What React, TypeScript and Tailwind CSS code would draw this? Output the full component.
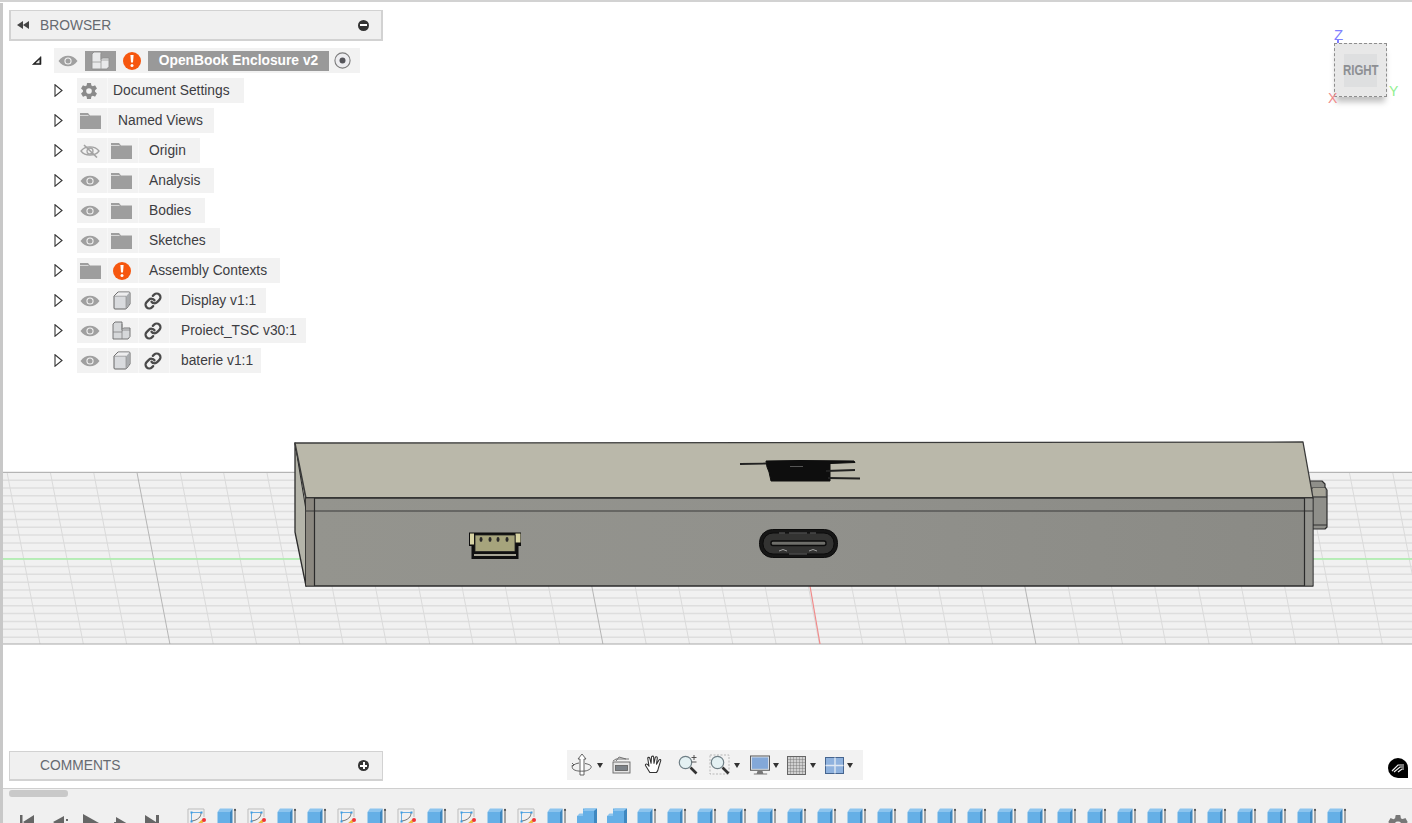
import { ReactNode } from 'react'
import { Link as LinkIcon } from 'lucide-react'
import { IoSettingsSharp } from 'react-icons/io5'

const font = "font-['Liberation_Sans',Arial,sans-serif]"

// timeline features, S = sketch, B = body, L = combine
const timeline = 'SBSBBSBSBSBSBLLBBBBBBBBBBBBBBBBBBBBBBBB'.split('')

function Eye({ off }: { off?: boolean }) {
  if (off) {
    return (
      <svg width="20" height="14" viewBox="0 0 20 14" fill="none" stroke="#a3a3a3" strokeWidth="1.3">
        <path d="M1 7 C5 1.5 15 1.5 19 7 C15 12.5 5 12.5 1 7 Z" />
        <circle cx="10" cy="7" r="3" />
        <path d="M4 1 L17 13.5" strokeWidth="1.6" />
      </svg>
    )
  }
  return (
    <svg width="20" height="12" viewBox="0 0 20 12">
      <path d="M0.5 6 C5 -1 15 -1 19.5 6 C15 13 5 13 0.5 6 Z" fill="#a0a0a0" />
      <circle cx="10" cy="6" r="3.6" fill="#f2f2f2" />
      <circle cx="10" cy="6" r="2.5" fill="#a0a0a0" />
    </svg>
  )
}

function Folder() {
  return (
    <svg width="21" height="16" viewBox="0 0 21 16">
      <path d="M0 0 H8 L10 2.5 H21 V16 H0 Z" fill="#9e9e9e" />
      <path d="M0 2.5 H8.5" stroke="#e6e6e6" strokeWidth="0.8" />
    </svg>
  )
}

function Warn() {
  return (
    <div className="flex h-[18px] w-[18px] items-center justify-center rounded-full bg-[#f6570f]">
      <svg width="4" height="12" viewBox="0 0 4 12" fill="#fff">
        <path d="M0.4 0 H3.6 L3 7.6 H1 Z" />
        <circle cx="2" cy="10.4" r="1.5" />
      </svg>
    </div>
  )
}

function Cube() {
  return (
    <svg width="18" height="19" viewBox="0 0 18 19">
      <path d="M1 5 L5 1 H16 Q17 1 17 2 V13 L13.5 17.5 Q13 18 12 18 H2 Q1 18 1 17 Z" fill="#d9dbde" stroke="#666" strokeWidth="1" strokeLinejoin="round" />
      <path d="M1.5 5 L5.2 1.5 H16.5 L13 5 Z" fill="#eeeeef" />
      <path d="M13 5.5 L16.6 1.5 V13 L13 17.5 Z" fill="#a9acaf" />
      <path d="M1.5 5.2 H13 V17.5" fill="none" stroke="#8f8f8f" strokeWidth="0.7" />
    </svg>
  )
}

function Component({ light }: { light?: boolean }) {
  return (
    <svg width="19" height="19" viewBox="0 0 19 19">
      <path d="M1 3 L3 1 H10 V8.5 L11.5 7 H18 V15.5 L16 18 H1 Z" fill={light ? '#e8e9ea' : '#d6d8da'} stroke={light ? '#8f8f8f' : '#6a6a6a'} strokeWidth="0.9" strokeLinejoin="round" />
      <path d="M1 11 H10 V18 M10 3 V11 M10 10 L11.5 9 H18" fill="none" stroke={light ? '#9a9a9a' : '#808080'} strokeWidth="0.8" />
    </svg>
  )
}

function Slot({ children, pl = 'pl-[3px]' }: { children: ReactNode; pl?: string }) {
  return <div className={`flex h-full w-[31px] shrink-0 items-center border-r border-[#f8f8f8] ${pl}`}>{children}</div>
}

function Chain() {
  return <LinkIcon size={18} color="#4a4a4a" strokeWidth={3} />
}

function Row({ children, label, pl, pr = 'pr-[12px]' }: { children: ReactNode; label: string; pl: string; pr?: string }) {
  return (
    <div className="flex h-[25px] items-center">
      <svg width="9" height="13" viewBox="0 0 9 13" className="ml-[45px] mr-[14px] shrink-0" fill="#fff" stroke="#333" strokeWidth="1.1">
        <path d="M1 0.8 L8 6.5 L1 12.2 Z" />
      </svg>
      <div className="flex h-full items-center bg-[#f2f2f2]">
        {children}
        <span className={`pt-[2px] text-[13.8px] text-[#3d3d42] ${pl} ${pr}`}>{label}</span>
      </div>
    </div>
  )
}

function BrowserTree() {
  return (
    <div className="mt-[7px] flex flex-col gap-[5px]">
      <div className="flex h-[25px] items-center">
        <svg width="10" height="9" viewBox="0 0 10 9" className="ml-[23px] mr-[12px] shrink-0">
          <path d="M9 0.5 V8.5 H0.5 Z" fill="#222" stroke="#222" strokeWidth="0.6" />
          <path d="M7.5 3.5 V7.3 H3.6 Z" fill="#e8e8e8" />
        </svg>
        <div className="flex h-full items-center bg-[#f2f2f2]">
          <div className="flex w-[31px] items-center pl-[4px]"><Eye /></div>
          <div className="flex h-[20px] w-[31px] items-center justify-center bg-[#9b9b9b]"><Component light /></div>
          <div className="flex w-[32px] items-center justify-center"><Warn /></div>
          <div className="flex h-[20px] w-[181px] items-center justify-center bg-[#999999] pt-[2px] text-[13.8px] font-bold text-white">OpenBook Enclosure v2</div>
          <div className="flex w-[31px] items-center pl-[5px]">
            <svg width="17" height="17" viewBox="0 0 17 17">
              <circle cx="8.5" cy="8.5" r="7.6" fill="#ededf0" stroke="#7c7c7c" strokeWidth="1.1" />
              <circle cx="8.5" cy="8.5" r="3" fill="#55555a" />
            </svg>
          </div>
        </div>
      </div>
      <Row label="Document Settings" pl="pl-[5px]" pr="pr-[14px]">
        <Slot><IoSettingsSharp size={18} color="#8a8a8a" /></Slot>
      </Row>
      <Row label="Named Views" pl="pl-[10px]" pr="pr-[11px]">
        <Slot><Folder /></Slot>
      </Row>
      <Row label="Origin" pl="pl-[10px]" pr="pr-[14px]">
        <Slot><Eye off /></Slot>
        <Slot><Folder /></Slot>
      </Row>
      <Row label="Analysis" pl="pl-[10px]" pr="pr-[14px]">
        <Slot><Eye /></Slot>
        <Slot><Folder /></Slot>
      </Row>
      <Row label="Bodies" pl="pl-[10px]" pr="pr-[14px]">
        <Slot><Eye /></Slot>
        <Slot><Folder /></Slot>
      </Row>
      <Row label="Sketches" pl="pl-[10px]" pr="pr-[14px]">
        <Slot><Eye /></Slot>
        <Slot><Folder /></Slot>
      </Row>
      <Row label="Assembly Contexts" pl="pl-[10px]" pr="pr-[13px]">
        <Slot><Folder /></Slot>
        <Slot pl="pl-[5px]"><Warn /></Slot>
      </Row>
      <Row label="Display v1:1" pl="pl-[11px]" pr="pr-[10px]">
        <Slot><Eye /></Slot>
        <Slot pl="pl-[5px]"><Cube /></Slot>
        <Slot pl="pl-[5px]"><Chain /></Slot>
      </Row>
      <Row label="Proiect_TSC v30:1" pl="pl-[11px]" pr="pr-[9px]">
        <Slot><Eye /></Slot>
        <Slot pl="pl-[4px]"><Component /></Slot>
        <Slot pl="pl-[5px]"><Chain /></Slot>
      </Row>
      <Row label="baterie v1:1" pl="pl-[11px]" pr="pr-[8px]">
        <Slot><Eye /></Slot>
        <Slot pl="pl-[5px]"><Cube /></Slot>
        <Slot pl="pl-[5px]"><Chain /></Slot>
      </Row>
    </div>
  )
}

function Grid() {
  const rows = Array.from({ length: 22 }, (_, i) => 472.3 + 7.85 * i)
  const cols = Array.from({ length: 34 }, (_, i) => i)
  return (
    <g>
      <rect x="3" y="472" width="1409" height="172" fill="#f1f1f1" />
      {rows.map((y) => (
        <line key={y} x1="3" x2="1412" y1={y} y2={y} stroke="#dedede" strokeWidth="1.5" />
      ))}
      {cols.map((i) => {
        const major = i % 10 === 3
        return (
          <line
            key={i}
            x1={7 + 43.3 * i}
            y1="472"
            x2={40 + 43.3 * i}
            y2="644"
            stroke={major ? '#b5b5b5' : '#dadada'}
            strokeWidth="1"
          />
        )
      })}
      <line x1="3" x2="1412" y1="559" y2="559" stroke="#a8f0a8" strokeWidth="1.5" />
      <line x1="3" x2="1412" y1="472.5" y2="472.5" stroke="#b4b4b4" strokeWidth="1" />
      <line x1="3" x2="1412" y1="644" y2="644" stroke="#a8a8a8" strokeWidth="1" />
      <line x1="810" y1="586" x2="820" y2="644" stroke="#f08a8a" strokeWidth="1.2" />
    </g>
  )
}

function Enclosure() {
  return (
    <g strokeLinejoin="round">
      <defs>
        <linearGradient id="front" x1="0" y1="0" x2="1" y2="0">
          <stop offset="0" stopColor="#94948e" />
          <stop offset="0.5" stopColor="#91918c" />
          <stop offset="1" stopColor="#8a8a85" />
        </linearGradient>
      </defs>
      {/* knob at the right end */}
      <path d="M1310 481 H1322 L1325 484 V487 L1327 490 V527 L1325 529 H1312 Z" fill="#8f8f8a" stroke="#2e2e2e" strokeWidth="1.2" />
      <path d="M1311 488 H1325 M1313 497 H1327 M1313 525 H1327" stroke="#2e2e2e" strokeWidth="1" fill="none" />
      <rect x="1313" y="488" width="12" height="8" fill="#a6a498" />
      {/* left side */}
      <path d="M295 443 L306 498 V586 L295 532 Z" fill="#b4b4a9" stroke="#2b2b2b" strokeWidth="1.3" />
      <path d="M295 443 L306 510" stroke="#2b2b2b" strokeWidth="1" />
      {/* top */}
      <path d="M295 443 L1303 442 L1313 498 H306 Z" fill="#bab8aa" stroke="#3a3a3a" strokeWidth="1.3" />
      {/* front */}
      <rect x="306" y="498" width="1007" height="88" fill="url(#front)" stroke="#2b2b2b" strokeWidth="1.3" />
      <rect x="306" y="498.5" width="8.5" height="87" fill="#8b8880" />
      <rect x="1304.5" y="498.5" width="8" height="87" fill="#94948f" />
      <line x1="306" x2="1313" y1="511" y2="511" stroke="#3a3a3a" strokeWidth="1.2" />
      <line x1="314.5" x2="314.5" y1="498" y2="586" stroke="#2b2b2b" strokeWidth="1.2" />
      <line x1="1304.5" x2="1304.5" y1="498" y2="586" stroke="#2b2b2b" strokeWidth="1.2" />
      {/* scribbled out text */}
      <path d="M766 461 L800 460.5 L854 461 L855 462.5 L830 463.5 L830 481 L771 481 L769 472 L767 467 Z" fill="#0e0e0e" stroke="#0e0e0e" strokeWidth="1" />
      <path d="M740 464 L766 463.5 M826 471 L855 470 M828 478 L860 478.5" stroke="#222" strokeWidth="1.8" fill="none" />
      <line x1="790" x2="803" y1="466.5" y2="466.5" stroke="#555" strokeWidth="1" />
      {/* wire connector */}
      <path d="M469 532.5 H521 V546 H518.5 V559 H471.5 V546 H469 Z" fill="#0f0f0f" />
      <rect x="470" y="533.5" width="4" height="11" fill="#d8d4a4" />
      <rect x="515.5" y="533.5" width="5" height="9" fill="#d8d4a4" />
      <rect x="475" y="535" width="40" height="16.5" fill="#a6a47c" stroke="#222" strokeWidth="0.8" />
      <rect x="474" y="554" width="42" height="2" fill="#a5a394" />
      {[481, 490, 498, 507].map((x) => (
        <ellipse key={x} cx={x} cy="539.5" rx="1.5" ry="2.4" fill="#2a2a2a" />
      ))}
      {/* usb c port */}
      <rect x="759.5" y="529.5" width="78" height="28" rx="13" fill="#161616" stroke="#0c0c0c" strokeWidth="1" />
      <rect x="763" y="533" width="71" height="21" rx="10" fill="#333332" stroke="#0c0c0c" strokeWidth="1" />
      <rect x="771" y="541" width="55" height="4.5" rx="2" fill="#6e6e6a" stroke="#0c0c0c" strokeWidth="1.4" />
      <path d="M779 551 Q783 548 787 551 M809 551 Q813 548 817 551" stroke="#bbb" strokeWidth="0.8" fill="none" />
      <path d="M779 533 H785 M810 533 H816 M789 533 H807 M789 554 H807" stroke="#777" strokeWidth="0.8" fill="none" />
    </g>
  )
}

function Caret({ ml }: { ml: string }) {
  return <div className={`h-0 w-0 border-x-[3.5px] border-t-[5px] border-x-transparent border-t-[#333] ${ml}`} />
}

function Magnifier({ dashed, plus }: { dashed?: boolean; plus?: boolean }) {
  return (
    <svg width="22" height="22" viewBox="0 0 22 22" fill="none">
      {dashed && <rect x="1" y="1" width="19" height="19" stroke="#aaa" strokeWidth="0.8" strokeDasharray="2 1.5" />}
      <circle cx="8.5" cy="8.5" r="6.2" fill="#e4f1f3" stroke="#6f7f86" strokeWidth="1.2" />
      <path d="M13.5 13.5 L19.5 19.5" stroke="#333" strokeWidth="2.6" />
      {plus && <path d="M17 1 V6 M14.5 3.5 H19.5 M14.5 8 H19.5" stroke="#444" strokeWidth="0.9" />}
    </svg>
  )
}

function NavBar() {
  return (
    <div className="absolute left-[564px] top-[747px] flex h-[30px] w-[296px] items-center bg-[#f2f2f2] pl-[4px]">
      <svg width="22" height="24" viewBox="0 0 22 24" fill="none" stroke="#555" strokeWidth="0.9">
        <path d="M11 1 L15 6 H13 V22 H9 V6 H7 Z" fill="#fff" />
        <path d="M8 10 C2 11 0 14 2 16 C4 18 9 18.5 14 18 C18 17.5 21 15 20 13 C19.5 12 17 11 14 10.5" />
        <path d="M3 12 L1 10 M3 12 L0.5 13" />
      </svg>
      <Caret ml="ml-[4px]" />
      <svg className="ml-[8.5px]" width="19" height="18" viewBox="0 0 19 18" fill="none" stroke="#666" strokeWidth="0.9">
        <path d="M4 5 L7 1 L14 3" />
        <rect x="1" y="6" width="17" height="11" fill="#e4e4e4" />
        <rect x="3.5" y="9.5" width="12" height="5" fill="#7c8288" />
        <path d="M1 5 L4 3 H17" />
      </svg>
      <svg className="ml-[13px]" width="20" height="22" viewBox="0 0 24 24" fill="#fff" stroke="#333" strokeWidth="1.3" strokeLinejoin="round">
        <path d="M7 21 L2 13 C1 11 3 10 4.5 11.5 L6 13.5 L4.5 4 C4.5 2.5 6.5 2.5 7 4 L8.5 10 L9 2.5 C9 1 11.5 1 11.5 2.5 L12 10 L13.5 3 C14 1.5 16 2 16 3.5 L15 11 L18 6 C19 4.8 20.5 5.6 20 7 L17.5 15 C17 18 16 20 15 21 Z" />
      </svg>
      <div className="ml-[13px]"><Magnifier plus /></div>
      <div className="ml-[10px]"><Magnifier dashed /></div>
      <Caret ml="ml-[3.5px]" />
      <svg className="ml-[9.5px]" width="20" height="21" viewBox="0 0 21 21">
        <rect x="0.5" y="0.5" width="20" height="15" fill="#dfe3e8" stroke="#555" />
        <rect x="2" y="2" width="17" height="12" fill="#83a8d8" />
        <path d="M8 16 H13 L14 19 H18 V20 H4 V19 H7 Z" fill="#777" />
      </svg>
      <Caret ml="ml-[3px]" />
      <svg className="ml-[8.5px]" width="19" height="19" viewBox="0 0 19 19">
        <defs>
          <pattern id="cells" width="3" height="3" patternUnits="userSpaceOnUse">
            <path d="M3 0 H0 V3" fill="none" stroke="#6f6f6f" strokeWidth="0.8" />
          </pattern>
        </defs>
        <rect x="0.5" y="0.5" width="18" height="18" fill="#d0d0d0" />
        <rect x="0.5" y="0.5" width="18" height="18" fill="url(#cells)" stroke="#666" />
      </svg>
      <Caret ml="ml-[3.5px]" />
      <svg className="ml-[9.5px]" width="19" height="17" viewBox="0 0 19 17">
        <rect x="0.5" y="0.5" width="18" height="16" fill="#8fb2de" stroke="#46658f" />
        <path d="M10 0.5 V16.5 M0.5 8.5 H18.5" stroke="#dfe8f3" strokeWidth="1.4" />
      </svg>
      <Caret ml="ml-[2.5px]" />
    </div>
  )
}

function ViewCube() {
  return (
    <div className="absolute left-[1322px] top-[24px] h-[80px] w-[80px]">
      <span className="absolute left-[9px] top-0 text-[15px] leading-[15px] text-[#8080ff]">Z</span>
      <div className="absolute left-[12px] top-[13px] h-[4px] w-[2px] bg-[#8080ff]" />
      <div className="absolute left-[9px] top-[16px] flex h-[54px] w-[53px] items-center justify-center border border-dashed border-[#8e8e8e] bg-[#e8e8e8] shadow-[0_7px_6px_-2px_rgba(0,0,0,0.25)]">
        <div className="flex h-[33px] w-[33px] items-center justify-center bg-[#dedfe0] text-[14px] font-bold text-[#8d8f93]">
          <span className="inline-block scale-x-[0.82]">RIGHT</span>
        </div>
      </div>
      <span className="absolute left-[64px] top-[57px] text-[14px] leading-[15px] text-[#90f090]">Y</span>
      <span className="absolute left-[3px] top-[64px] text-[14px] leading-[15px] text-[#f08c8c]">X</span>
    </div>
  )
}

function SketchIcon() {
  return (
    <svg width="20" height="19" viewBox="0 0 20 19" fill="none">
      <path d="M1 19 V1 H17 V9" stroke="#bdbdbd" strokeWidth="1" />
      <path d="M4.5 4.5 H14.5 M4.5 4.5 V14" stroke="#3f9be0" strokeWidth="0.8" />
      <path d="M14 5 C14 9 11 12 5 13" stroke="#555" strokeWidth="0.8" />
      <rect x="3.5" y="3.5" width="2" height="2" fill="#3f9be0" />
      <rect x="13.5" y="3.5" width="2" height="2" fill="#3f9be0" />
      <rect x="3.5" y="12.5" width="2" height="2" fill="#3f9be0" />
      <path d="M10 16 L15 11.5 L17 13.5 L12 18 Z" fill="#f2b53a" />
      <circle cx="17" cy="12" r="2" fill="#f0353a" />
    </svg>
  )
}

function BodyIcon() {
  return (
    <svg width="20" height="19" viewBox="0 0 20 19">
      <path d="M0.5 4 L3 0.5 H15.5 L13 4 Z" fill="#8cc4ee" />
      <rect x="0.5" y="4" width="12.5" height="15" fill="#65afe6" />
      <path d="M13 4 L15.5 0.5 V19 H13 Z" fill="#3f88c0" />
      <path d="M18 19 V1" stroke="#333" strokeWidth="0.8" />
      <path d="M16.8 2.4 L18 0.6 L19.2 2.4 Z" fill="#222" />
    </svg>
  )
}

function CombineIcon() {
  return (
    <svg width="20" height="19" viewBox="0 0 20 19">
      <path d="M6 0.5 H20 V15 H17 V18 H0 V8 H6 Z" fill="#65afe6" />
      <path d="M6 3 L8 0.5 H20 L17 3 Z" fill="#8cc4ee" />
      <path d="M17 3 L20 0.5 V15 L17 18 Z" fill="#3f88c0" />
      <path d="M0 8 L2.5 5.5 H6 V8 Z" fill="#8cc4ee" />
    </svg>
  )
}

function Timeline() {
  return (
    <div className="relative h-[35px] shrink-0 overflow-hidden border-t border-[#cfcfcf] bg-[#f0f0f0]">
      <div className="ml-[6px] mt-[1px] h-[7px] w-[59px] rounded-[3px] bg-[#c9c9c9]" />
      <div className="mt-[11px] flex h-[20px] items-start pl-[184px]">
        {timeline.map((t, i) => (
          <div key={i} className="w-[30px] shrink-0">
            {t === 'S' ? <SketchIcon /> : t === 'L' ? <CombineIcon /> : <BodyIcon />}
          </div>
        ))}
      </div>
      {/* play controls, cut by the window bottom */}
      <svg className="absolute left-[14px] top-[25px]" width="146" height="18" viewBox="0 0 146 18" fill="#666">
        <path d="M3 1 H5.5 V16 H3 Z M17 1 V16 L6 8 Z" />
        <path d="M36 8 L47 2 V16 Z M49 5 H51 V7 H49 Z" />
        <path d="M66 0 L82 9 L66 18 Z" />
        <path d="M97 8 H99 V3 L111 10 L99 16 Z" />
        <path d="M128 1 L139 8 V1 H142 V16 H139 V9 L128 16 Z" />
      </svg>
      <div className="absolute left-[1384px] top-[25px]">
        <IoSettingsSharp size={22} color="#777" />
      </div>
    </div>
  )
}

export default function App() {
  return (
    <div className={`flex h-[823px] w-[1412px] flex-col overflow-hidden bg-white ${font}`}>
      <div className="h-[3px] shrink-0 border-t-2 border-[#d2d2d2]" />
      <div className="flex min-h-0 flex-1 flex-col border-l-[3px] border-[#c8c8c8]">
        <div className="relative min-h-0 flex-1">
          <svg className="absolute inset-0" width="1409" height="785" viewBox="3 3 1409 785">
            <Grid />
            <Enclosure />
          </svg>

          <div className="absolute left-[6px] top-[7px] w-[374px]">
            <div className="flex h-[31px] items-center border-2 border-t-[1px] border-[#d2d2d2] bg-[#f0f0f0] pl-[6px] pr-[12px]">
              <svg width="12" height="8" viewBox="0 0 12 8" fill="#444">
                <path d="M6 0 V8 L0 4 Z M12 0 V8 L6 4 Z" />
              </svg>
              <span className="ml-[11px] flex-1 pt-[2px] text-[13.8px] text-[#666a70]">BROWSER</span>
              <div className="flex h-[11px] w-[11px] items-center justify-center rounded-full bg-[#333]">
                <div className="h-[2px] w-[7px] bg-white" />
              </div>
            </div>
            <BrowserTree />
          </div>

          <ViewCube />
          <NavBar />

          <div className="absolute left-[6px] top-[748px] flex h-[30px] w-[374px] items-center border border-b-2 border-[#d2d2d2] bg-[#f0f0f0] pl-[30px] pr-[13px]">
            <span className="flex-1 pt-[2px] text-[13.8px] text-[#666a70]">COMMENTS</span>
            <div className="relative h-[11px] w-[11px] rounded-full bg-[#333]">
              <div className="absolute left-[2px] top-[4.5px] h-[2px] w-[7px] bg-white" />
              <div className="absolute left-[4.5px] top-[2px] h-[7px] w-[2px] bg-white" />
            </div>
          </div>

          <div className="absolute left-[1385px] top-[755px] flex h-[20px] w-[20px] items-center justify-center rounded-full rounded-br-[2px] bg-black">
            <svg width="14" height="10" viewBox="0 0 14 10" stroke="#eee" strokeWidth="1.2" fill="none">
              <path d="M1 8 L7 2 H13 M3 9 L9 4 H13 M7 9 L11 6 H13" />
            </svg>
          </div>
        </div>
        <Timeline />
      </div>
    </div>
  )
}
